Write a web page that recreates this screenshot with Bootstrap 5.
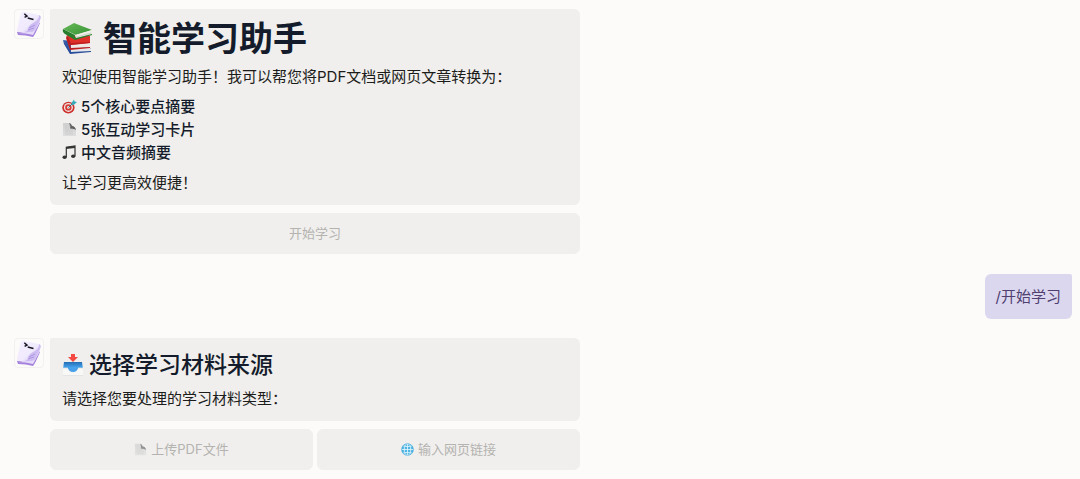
<!DOCTYPE html>
<html lang="zh-CN">
<head>
<meta charset="utf-8">
<meta name="viewport" content="width=device-width, initial-scale=1">
<title>智能学习助手</title>
<link href="https://cdn.jsdelivr.net/npm/bootstrap@5.3.0/dist/css/bootstrap.min.css" rel="stylesheet">
<style>
body { background: #fcfbf9; color: #1c1c1a; font-family: Inter, "Noto Sans CJK SC", sans-serif; font-size: 15px; line-height: 23px; }
.chat { padding: 9px 8px 8px 14px; }
.turn { gap: 6px; }
.avatar { width: 30px; height: 30px; border: 1px solid #f2f1ef; border-radius: 4px; }
.reply { width: 530px; max-width: 100%; }
.bubble { background: #f0efed; border-radius: 2px 6px 6px 6px; padding: 8px 12px 10px; }
.bubble h1, .bubble h2, .points { color: #141c2b; font-weight: 500; }
.bubble h1 { font-size: 34px; font-weight: 600; line-height: 44px; gap: 9px; margin-bottom: 4px; }
.bubble h2 { font-size: 23px; line-height: 38px; gap: 5px; margin-bottom: 3px; }
.bubble p:last-child { padding-bottom: 1px; }
.points { margin: 7px 0; }
.points li { gap: 4px; }
.choice { --bs-btn-font-size: 13px; --bs-btn-line-height: 19px; --bs-btn-padding-y: 10px; --bs-btn-border-radius: 6px;
  --bs-btn-disabled-bg: #f0efed; --bs-btn-disabled-border-color: #f0efed; --bs-btn-disabled-color: #b4b3b0; --bs-btn-disabled-opacity: 1; }
.faded { opacity: .65; }
.request { background: #dbd7ef; color: #50406f; border-radius: 6px 2px 6px 6px; padding: 11px; margin: 20px 0 19px; }
</style>
</head>
<body>
<svg width="0" height="0" class="position-absolute" aria-hidden="true">
  <defs>
    <linearGradient id="lilac" x1="0" y1="0" x2="1" y2="1"><stop stop-color="#f4effe"/><stop offset=".6" stop-color="#f0eafd"/><stop offset="1" stop-color="#b59ae6"/></linearGradient>
    <linearGradient id="leaf" x1="0" y1="0" x2="1" y2="1"><stop stop-color="#68b958"/><stop offset="1" stop-color="#359234"/></linearGradient>
    <linearGradient id="water" x1="0" y1="0" x2="0" y2="1"><stop stop-color="#236eb5"/><stop offset="1" stop-color="#50b1fa"/></linearGradient>
    <linearGradient id="paper" x1="0" y1="0" x2="0" y2="1"><stop stop-color="#d0d0d0"/><stop offset="1" stop-color="#dedede"/></linearGradient>
  </defs>
  <symbol id="i-bot" viewBox="0 0 28 28">
    <path d="M2 22 3 25Q11 25 18 27Q20 25 25 13L23 12 15 22z" fill="#a582db"/>
    <path d="M3 23Q11 23 18 25L25 12 24 10 14 21z" fill="#e6dafa"/>
    <path d="M6 3Q7 1 10 2L24 5Q24 10 22 12Q15 14 13 19Q12 22 8 22L2 22Q2 19 3 15z" fill="url(#lilac)"/>
    <path d="M24 5Q27 6 25 10L20 20Q18 23 8 22Q13 22 13 18Q15 14 20 12Q24 10 24 5z" fill="#cdbcf2"/>
    <path d="M14 18l6-3M13 20l6-2" stroke="#a68bdc" stroke-width=".8"/>
    <path d="M9.3 3.8 12 6.1 9.6 7.4M12.7 8l5.8 1.5" fill="none" stroke="#171520" stroke-width="1.5"/>
  </symbol>
  <symbol id="i-books" viewBox="0 0 32 32">
    <path d="M1 17 8 29 29 26 25 20z" fill="#3159a6"/><path d="M9 26l20-2-1 4-19 2z" fill="#e7e7e9"/><path d="M1 17 2 21 8 31 29 29v-1L9 29z" fill="#274c99"/>
    <path d="M5 12 9 23 28 21 28 13z" fill="#de3028"/><path d="M9 22l19-2v4L9 26z" fill="#eee9e5"/><path d="M5 12 4 15 8 27 28 25v-1L9 25 8 22 28 20v-1L9 20z" fill="#bd1d1e"/>
    <path d="M1 6 12 0 30 7 14 12z" fill="url(#leaf)"/><path d="M13 12l17-5v4l-16 5z" fill="#efefe8"/><path d="M14 14l15-4" stroke="#bbb" stroke-width=".6"/><path d="M1 6Q0 9 3 11l10 6 17-5v-1l-16 4q-2-1-1-3z" fill="#287e2c"/>
  </symbol>
  <symbol id="i-target" viewBox="0 0 15 15">
    <ellipse cx="6.4" cy="8.6" rx="6.2" ry="5.9" fill="#cd302d"/><circle cx="6.4" cy="8.4" r="4.5" fill="#f1e6e3"/><circle cx="6.4" cy="8.4" r="3.2" fill="#d63a35"/><circle cx="6.4" cy="8.4" r="1.4" fill="#f4e5e1"/>
    <path d="M6.5 8.5 12 3" stroke="#346c7d"/><path d="M9.5 4 12 .6l.5 2L15 3l-3 2.8-2.5.1z" fill="#36a9ba"/>
  </symbol>
  <symbol id="i-page" viewBox="0 0 15 15">
    <path d="M1 1h7l6 6v7H1z" fill="url(#paper)"/><path d="M3 4h3M3 6h4M3 8h8M3 10h8M3 12h8" stroke="#bebebe" stroke-width=".5"/>
    <path d="M7 1q2 0 3 3 3 0 4 4-3-2-6-1 1-3-1-6" fill="#606060"/><path d="M7 1q2 3 1 6 2-1 6 1L8 6z" fill="#aaa"/>
  </symbol>
  <symbol id="i-music" viewBox="0 0 15 15">
    <path d="M4.3 12V2.2L13 1v10" fill="none" stroke="#333" stroke-width="1.2"/><path d="M4 2l9-1v2L4 4z" fill="#333"/><ellipse cx="2.6" cy="12.3" rx="2.1" ry="1.7" fill="#333"/><ellipse cx="11.2" cy="11.2" rx="2.1" ry="1.7" fill="#333"/>
  </symbol>
  <symbol id="i-inbox" viewBox="0 0 22 22">
    <path d="M2 9h18l1 6v6H1v-6z" fill="#f5f5f5"/><path d="M2 8h18l1 7H1z" fill="url(#water)"/>
    <path d="M1 14h5q1 4 5 4t5-4h5v8H1z" fill="#f8f8f7"/><path d="M1 14h5q1 4 5 4t5-4h5M1 21.5h20" fill="none" stroke="#dcdcdc" stroke-width=".7"/><path d="M6 14h10q-1 4-5 4t-5-4" fill="#48a0ea"/>
    <path d="M9 0h4v3h3l-5 5-5-5h3z" fill="#f44943"/>
  </symbol>
  <symbol id="i-globe" viewBox="0 0 14 14">
    <circle cx="7" cy="7" r="6.5" fill="#4fb5e2"/><path d="M7 .5v13M.5 7h13M2 3q5 2 10 0M2 11q5-2 10 0" fill="none" stroke="#e2f4fc" stroke-width=".9"/><ellipse cx="7" cy="7" rx="3.5" ry="6.4" fill="none" stroke="#e2f4fc" stroke-width=".9"/><circle cx="7" cy="7" r="6.3" fill="none" stroke="#3b9fcf" stroke-width=".5"/>
  </symbol>
</svg>
<main class="chat d-flex flex-column">
  <section class="turn d-flex">
    <div class="avatar flex-shrink-0"><svg width="28" height="28" class="d-block" role="img" aria-label="助手"><use href="#i-bot"/></svg></div>
    <div class="reply d-grid gap-2">
      <div class="bubble">
        <h1 class="d-flex align-items-center"><svg width="32" height="32" aria-hidden="true"><use href="#i-books"/></svg>智能学习助手</h1>
        <p class="mb-0">欢迎使用智能学习助手！我可以帮您将PDF文档或网页文章转换为：</p>
        <ul class="points list-unstyled">
          <li class="d-flex align-items-center"><svg width="15" height="15" aria-hidden="true"><use href="#i-target"/></svg>5个核心要点摘要</li>
          <li class="d-flex align-items-center"><svg width="15" height="15" aria-hidden="true"><use href="#i-page"/></svg>5张互动学习卡片</li>
          <li class="d-flex align-items-center"><svg width="15" height="15" aria-hidden="true"><use href="#i-music"/></svg>中文音频摘要</li>
        </ul>
        <p class="mb-0">让学习更高效便捷！</p>
      </div>
      <button type="button" class="btn choice" disabled>开始学习</button>
    </div>
  </section>
  <div class="request align-self-end">/开始学习</div>
  <section class="turn d-flex">
    <div class="avatar flex-shrink-0"><svg width="28" height="28" class="d-block" role="img" aria-label="助手"><use href="#i-bot"/></svg></div>
    <div class="reply d-grid gap-2">
      <div class="bubble">
        <h2 class="d-flex align-items-center"><svg width="22" height="22" aria-hidden="true"><use href="#i-inbox"/></svg>选择学习材料来源</h2>
        <p class="mb-0">请选择您要处理的学习材料类型：</p>
      </div>
      <div class="d-flex gap-1">
        <button type="button" class="btn choice w-50 d-flex align-items-center justify-content-center gap-1" disabled><svg class="faded" width="13" height="13" aria-hidden="true"><use href="#i-page"/></svg>上传PDF文件</button>
        <button type="button" class="btn choice w-50 d-flex align-items-center justify-content-center gap-1" disabled><svg width="13" height="13" aria-hidden="true"><use href="#i-globe"/></svg>输入网页链接</button>
      </div>
    </div>
  </section>
</main>
<script src="https://cdn.jsdelivr.net/npm/bootstrap@5.3.0/dist/js/bootstrap.bundle.min.js"></script>
</body>
</html>
